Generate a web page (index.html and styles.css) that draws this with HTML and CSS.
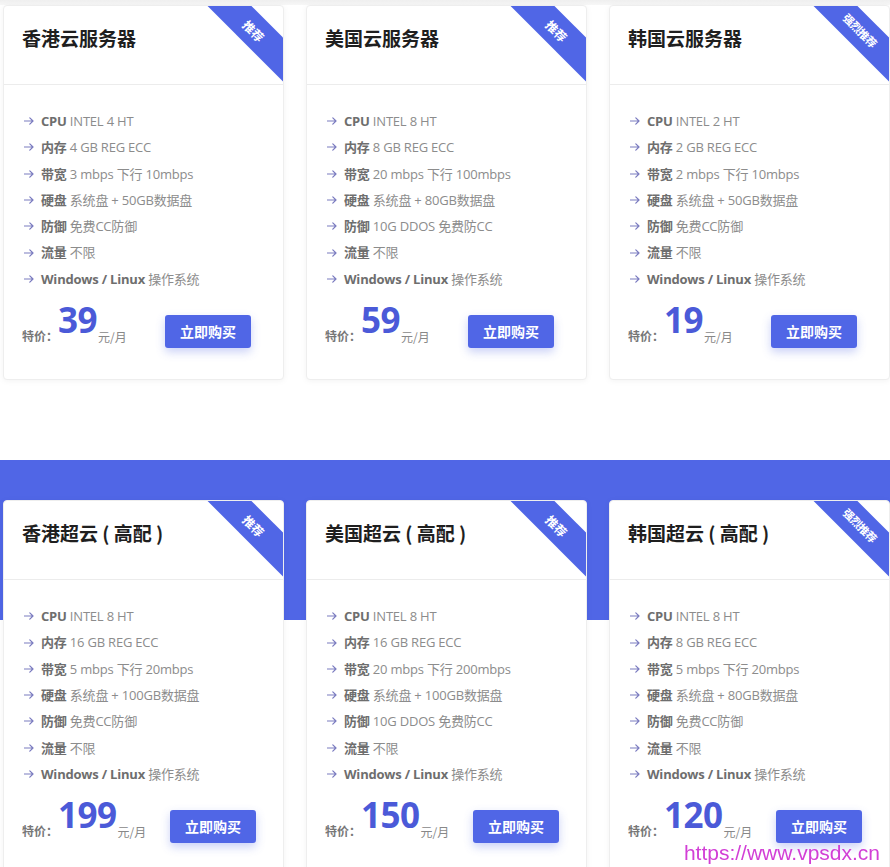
FILE: index.html
```html
<!DOCTYPE html>
<html lang="zh-CN">
<head>
<meta charset="utf-8">
<title>云服务器价格</title>
<link rel="stylesheet" href="styles.css">
</head>
<body>
<svg class="defs" width="0" height="0" aria-hidden="true">
  <symbol id="arr" viewBox="0 0 10 8">
    <path d="M0.5 4H9M5.8 0.8L9 4L5.8 7.2" fill="none" stroke="currentColor" stroke-width="1.2" stroke-linecap="round" stroke-linejoin="round"/>
  </symbol>
</svg>

<section class="plans plans-std">
  <div class="cards">
    <article class="card">
      <div class="ribbon">推荐</div>
      <header class="card-head"><h3>香港云服务器</h3></header>
      <ul class="specs">
        <li><svg class="ico"><use href="#arr"/></svg><b>CPU</b> INTEL 4 HT</li>
        <li><svg class="ico"><use href="#arr"/></svg><b>内存</b> 4 GB REG ECC</li>
        <li><svg class="ico"><use href="#arr"/></svg><b>带宽</b> 3 mbps 下行 10mbps</li>
        <li><svg class="ico"><use href="#arr"/></svg><b>硬盘</b> 系统盘 + 50GB数据盘</li>
        <li><svg class="ico"><use href="#arr"/></svg><b>防御</b> 免费CC防御</li>
        <li><svg class="ico"><use href="#arr"/></svg><b>流量</b> 不限</li>
        <li><svg class="ico"><use href="#arr"/></svg><b>Windows / Linux</b> 操作系统</li>
      </ul>
      <div class="buy-row">
        <div class="price"><span class="lbl">特价：</span><span class="num">39</span><span class="unit">元/月</span></div>
        <a class="buy" href="#">立即购买</a>
      </div>
    </article>

    <article class="card">
      <div class="ribbon">推荐</div>
      <header class="card-head"><h3>美国云服务器</h3></header>
      <ul class="specs">
        <li><svg class="ico"><use href="#arr"/></svg><b>CPU</b> INTEL 8 HT</li>
        <li><svg class="ico"><use href="#arr"/></svg><b>内存</b> 8 GB REG ECC</li>
        <li><svg class="ico"><use href="#arr"/></svg><b>带宽</b> 20 mbps 下行 100mbps</li>
        <li><svg class="ico"><use href="#arr"/></svg><b>硬盘</b> 系统盘 + 80GB数据盘</li>
        <li><svg class="ico"><use href="#arr"/></svg><b>防御</b> 10G DDOS 免费防CC</li>
        <li><svg class="ico"><use href="#arr"/></svg><b>流量</b> 不限</li>
        <li><svg class="ico"><use href="#arr"/></svg><b>Windows / Linux</b> 操作系统</li>
      </ul>
      <div class="buy-row">
        <div class="price"><span class="lbl">特价：</span><span class="num">59</span><span class="unit">元/月</span></div>
        <a class="buy" href="#">立即购买</a>
      </div>
    </article>

    <article class="card">
      <div class="ribbon ribbon-long">强烈推荐</div>
      <header class="card-head"><h3>韩国云服务器</h3></header>
      <ul class="specs">
        <li><svg class="ico"><use href="#arr"/></svg><b>CPU</b> INTEL 2 HT</li>
        <li><svg class="ico"><use href="#arr"/></svg><b>内存</b> 2 GB REG ECC</li>
        <li><svg class="ico"><use href="#arr"/></svg><b>带宽</b> 2 mbps 下行 10mbps</li>
        <li><svg class="ico"><use href="#arr"/></svg><b>硬盘</b> 系统盘 + 50GB数据盘</li>
        <li><svg class="ico"><use href="#arr"/></svg><b>防御</b> 免费CC防御</li>
        <li><svg class="ico"><use href="#arr"/></svg><b>流量</b> 不限</li>
        <li><svg class="ico"><use href="#arr"/></svg><b>Windows / Linux</b> 操作系统</li>
      </ul>
      <div class="buy-row">
        <div class="price"><span class="lbl">特价：</span><span class="num">19</span><span class="unit">元/月</span></div>
        <a class="buy" href="#">立即购买</a>
      </div>
    </article>
  </div>
</section>

<section class="plans plans-high">
  <div class="cards">
    <article class="card">
      <div class="ribbon">推荐</div>
      <header class="card-head"><h3>香港超云 ( 高配 )</h3></header>
      <ul class="specs">
        <li><svg class="ico"><use href="#arr"/></svg><b>CPU</b> INTEL 8 HT</li>
        <li><svg class="ico"><use href="#arr"/></svg><b>内存</b> 16 GB REG ECC</li>
        <li><svg class="ico"><use href="#arr"/></svg><b>带宽</b> 5 mbps 下行 20mbps</li>
        <li><svg class="ico"><use href="#arr"/></svg><b>硬盘</b> 系统盘 + 100GB数据盘</li>
        <li><svg class="ico"><use href="#arr"/></svg><b>防御</b> 免费CC防御</li>
        <li><svg class="ico"><use href="#arr"/></svg><b>流量</b> 不限</li>
        <li><svg class="ico"><use href="#arr"/></svg><b>Windows / Linux</b> 操作系统</li>
      </ul>
      <div class="buy-row">
        <div class="price"><span class="lbl">特价：</span><span class="num">199</span><span class="unit">元/月</span></div>
        <a class="buy" href="#">立即购买</a>
      </div>
    </article>

    <article class="card">
      <div class="ribbon">推荐</div>
      <header class="card-head"><h3>美国超云 ( 高配 )</h3></header>
      <ul class="specs">
        <li><svg class="ico"><use href="#arr"/></svg><b>CPU</b> INTEL 8 HT</li>
        <li><svg class="ico"><use href="#arr"/></svg><b>内存</b> 16 GB REG ECC</li>
        <li><svg class="ico"><use href="#arr"/></svg><b>带宽</b> 20 mbps 下行 200mbps</li>
        <li><svg class="ico"><use href="#arr"/></svg><b>硬盘</b> 系统盘 + 100GB数据盘</li>
        <li><svg class="ico"><use href="#arr"/></svg><b>防御</b> 10G DDOS 免费防CC</li>
        <li><svg class="ico"><use href="#arr"/></svg><b>流量</b> 不限</li>
        <li><svg class="ico"><use href="#arr"/></svg><b>Windows / Linux</b> 操作系统</li>
      </ul>
      <div class="buy-row">
        <div class="price"><span class="lbl">特价：</span><span class="num">150</span><span class="unit">元/月</span></div>
        <a class="buy" href="#">立即购买</a>
      </div>
    </article>

    <article class="card">
      <div class="ribbon ribbon-long">强烈推荐</div>
      <header class="card-head"><h3>韩国超云 ( 高配 )</h3></header>
      <ul class="specs">
        <li><svg class="ico"><use href="#arr"/></svg><b>CPU</b> INTEL 8 HT</li>
        <li><svg class="ico"><use href="#arr"/></svg><b>内存</b> 8 GB REG ECC</li>
        <li><svg class="ico"><use href="#arr"/></svg><b>带宽</b> 5 mbps 下行 20mbps</li>
        <li><svg class="ico"><use href="#arr"/></svg><b>硬盘</b> 系统盘 + 80GB数据盘</li>
        <li><svg class="ico"><use href="#arr"/></svg><b>防御</b> 免费CC防御</li>
        <li><svg class="ico"><use href="#arr"/></svg><b>流量</b> 不限</li>
        <li><svg class="ico"><use href="#arr"/></svg><b>Windows / Linux</b> 操作系统</li>
      </ul>
      <div class="buy-row">
        <div class="price"><span class="lbl">特价：</span><span class="num">120</span><span class="unit">元/月</span></div>
        <a class="buy" href="#">立即购买</a>
      </div>
    </article>
  </div>
</section>

<div class="watermark">https://www.vpsdx.cn</div>
</body>
</html>
```

FILE: styles.css
```css
* { box-sizing: border-box; }

html, body {
  margin: 0;
  padding: 0;
  background: #fff;
  overflow: hidden;
}

body {
  font-family: "Open Sans", "Noto Sans CJK SC", sans-serif;
  color: #888;
  width: 890px;
}

.defs { position: absolute; width: 0; height: 0; overflow: hidden; }

.plans-std {
  padding: 5px 0 80px;
  background: linear-gradient(#efefef 0, #f7f7f7 5px, #fff 5px);
}

.plans-high {
  padding: 40px 0 0;
  background: linear-gradient(#5066e6 0, #5066e6 160px, #fff 160px);
}

.cards {
  display: flex;
  gap: 22px;
  padding-left: 3px;
}

.card {
  position: relative;
  overflow: hidden;
  flex: 0 0 281px;
  background: #fff;
  border: 1px solid #eeeeee;
  border-radius: 4px;
  box-shadow: 0 1px 6px rgba(0, 0, 0, 0.05);
  padding-bottom: 31px;
}

.ribbon {
  position: absolute;
  left: 170px;
  top: 9px;
  width: 160px;
  height: 31px;
  transform: rotate(45deg);
  background: #5066e6;
  color: #fff;
  font-family: "Noto Sans CJK SC", sans-serif;
  font-weight: 700;
  font-size: 12px;
  line-height: 31px;
  text-align: center;
  z-index: 2;
}

.ribbon-long {
  font-size: 11px;
  letter-spacing: -0.5px;
}

.card-head {
  height: 79px;
  border-bottom: 1px solid #ececec;
  padding: 18px 18px 0;
}

.card-head h3 {
  margin: 0;
  font-family: "Noto Sans CJK SC", sans-serif;
  font-size: 19px;
  font-weight: 700;
  line-height: 28px;
  color: #1f1f1f;
  white-space: pre;
}

.specs {
  list-style: none;
  margin: 0;
  padding: 23px 0 0 20px;
}

.specs li {
  display: flex;
  align-items: center;
  font-size: 13px;
  line-height: 26.3px;
  color: #8c8c8c;
  white-space: pre;
  letter-spacing: -0.2px;
}

.specs b {
  color: #6e6e6e;
  font-weight: 700;
}

.ico {
  width: 10px;
  height: 8px;
  margin-right: 7px;
  color: #7b7cc0;
  flex: 0 0 auto;
}

.buy-row {
  display: flex;
  align-items: center;
  margin-top: 23px;
  padding-left: 18px;
  height: 33px;
}

.price {
  display: flex;
  align-items: flex-end;
  align-self: stretch;
  width: 143px;
  flex: 0 0 auto;
}

.plans-high .price { width: 148px; }

.lbl {
  font-family: "Noto Sans CJK SC", sans-serif;
  font-size: 12px;
  line-height: 12px;
  font-weight: 700;
  color: #777;
  margin-bottom: 6px;
}

.num {
  font-size: 35px;
  line-height: 35px;
  font-weight: 700;
  color: #4b5ad8;
  margin-bottom: 11px;
  letter-spacing: -0.5px;
}

.unit {
  font-family: "Noto Sans CJK SC", sans-serif;
  font-size: 12px;
  line-height: 12px;
  color: #888;
  margin-bottom: 5px;
  margin-left: 1px;
}

.buy {
  display: block;
  width: 86px;
  height: 33px;
  background: #5066e6;
  color: #fff;
  border-radius: 3px;
  text-decoration: none;
  text-align: center;
  font-family: "Noto Sans CJK SC", sans-serif;
  font-size: 14px;
  font-weight: 700;
  line-height: 33px;
  box-shadow: 0 4px 10px rgba(80, 102, 230, 0.3);
}

.watermark {
  position: fixed;
  right: 10px;
  bottom: 4px;
  font-family: "Liberation Sans", Arial, sans-serif;
  font-size: 21px;
  line-height: 21px;
  color: #d23fd6;
  z-index: 5;
}
```
